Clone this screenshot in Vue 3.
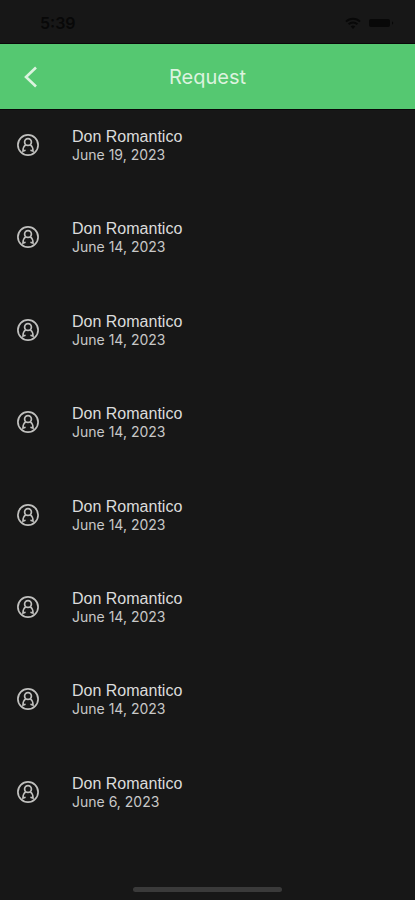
<template>
  <div class="screen">
    <div class="status-bar">
      <span class="status-time">5:39</span>
      <div class="status-icons">
        <svg width="16" height="12" viewBox="0 0 16 12" aria-hidden="true">
          <path d="M1 4.6a10 10 0 0 1 14 0M3.6 7.2a6.3 6.3 0 0 1 8.8 0" fill="none" stroke="currentColor" stroke-width="2" />
          <path d="M8 12 5.7 9.6a3.3 3.3 0 0 1 4.6 0z" fill="currentColor" />
        </svg>
        <svg width="25" height="10" viewBox="0 0 25 10" aria-hidden="true">
          <rect x="0" y="1" width="21" height="8" rx="2" fill="currentColor" />
          <path d="M23 3.5c1.6.4 1.6 2.6 0 3z" fill="currentColor" />
        </svg>
      </div>
    </div>

    <header class="header">
      <button class="back-button" type="button" aria-label="Back">
        <svg width="14" height="22" viewBox="0 0 14 22" aria-hidden="true">
          <path d="M12 1.5 2 11l10 9.5" fill="none" stroke="currentColor" stroke-width="2.6" />
        </svg>
      </button>
      <h1 class="title">Request</h1>
    </header>

    <ul class="request-list">
      <li v-for="request in requests" :key="request.id" class="request-item">
        <svg class="avatar" width="24" height="24" viewBox="0 0 24 24" aria-hidden="true">
          <g fill="none" stroke="currentColor" stroke-width="1.7">
            <circle cx="12" cy="12" r="10.1" />
            <circle cx="12" cy="9" r="3.4" />
            <path d="M9.8 11.6c-2 1.4-2.8 3.4-2.8 6.4l2.6-.8M14.2 11.6c2 1.4 2.8 3.4 2.8 6.4l-2.6-.8" />
          </g>
        </svg>
        <div class="request-info">
          <span class="request-name">{{ request.name }}</span>
          <span class="request-date">{{ request.date }}</span>
        </div>
      </li>
    </ul>

    <div class="home-area">
      <div class="home-indicator"></div>
    </div>
  </div>
</template>

<script setup>
import { ref } from 'vue'

const requests = ref([
  { id: 1, name: 'Don Romantico', date: 'June 19, 2023' },
  { id: 2, name: 'Don Romantico', date: 'June 14, 2023' },
  { id: 3, name: 'Don Romantico', date: 'June 14, 2023' },
  { id: 4, name: 'Don Romantico', date: 'June 14, 2023' },
  { id: 5, name: 'Don Romantico', date: 'June 14, 2023' },
  { id: 6, name: 'Don Romantico', date: 'June 14, 2023' },
  { id: 7, name: 'Don Romantico', date: 'June 14, 2023' },
  { id: 8, name: 'Don Romantico', date: 'June 6, 2023' }
])
</script>

<style>
body {
  margin: 0;
  background: #171717;
}
</style>

<style scoped>
.screen {
  display: flex;
  flex-direction: column;
  min-height: 100vh;
  background: #171717;
  color: #dcdcdc;
  font-family: Inter, 'Liberation Sans', sans-serif;
}

.status-bar {
  display: flex;
  align-items: center;
  justify-content: space-between;
  box-sizing: border-box;
  height: 44px;
  padding: 2px 21px 0 40px;
  border-bottom: 1px solid #080808;
  color: #080808;
}

.status-time {
  font-size: 16px;
  font-weight: 600;
}

.status-icons {
  display: flex;
  align-items: center;
  gap: 8px;
}

.header {
  display: grid;
  grid-template-columns: 60px 1fr 60px;
  align-items: center;
  height: 65px;
  background: #55c871;
  border-bottom: 1px solid #080808;
}

.back-button {
  display: flex;
  align-items: center;
  height: 44px;
  padding: 0 0 0 24px;
  border: 0;
  background: none;
  color: #dcf3df;
  cursor: pointer;
}

.title {
  margin: 0;
  font-size: 20px;
  font-weight: 400;
  line-height: 24px;
  text-align: center;
  color: #dcf3df;
}

.request-list {
  display: flex;
  flex: 1;
  flex-direction: column;
  margin: 0;
  padding: 0;
  list-style: none;
}

.request-item {
  display: flex;
  flex: 1 0 92px;
  align-items: flex-start;
  gap: 32px;
  box-sizing: border-box;
  padding: 18px 16px 0;
}

.avatar {
  flex: none;
  margin-top: 5px;
  color: #c0c0be;
}

.request-info {
  display: flex;
  flex-direction: column;
  line-height: 18px;
}

.request-name {
  font-family: 'Liberation Sans', Arial, sans-serif;
  font-size: 16px;
}

.request-date {
  font-size: 14px;
  color: #c8c8c8;
}

.home-area {
  display: flex;
  align-items: flex-end;
  justify-content: center;
  box-sizing: border-box;
  height: 51px;
  padding-bottom: 8px;
}

.home-indicator {
  width: 36%;
  height: 5px;
  border-radius: 3px;
  background: #3a3a3a;
}
</style>
